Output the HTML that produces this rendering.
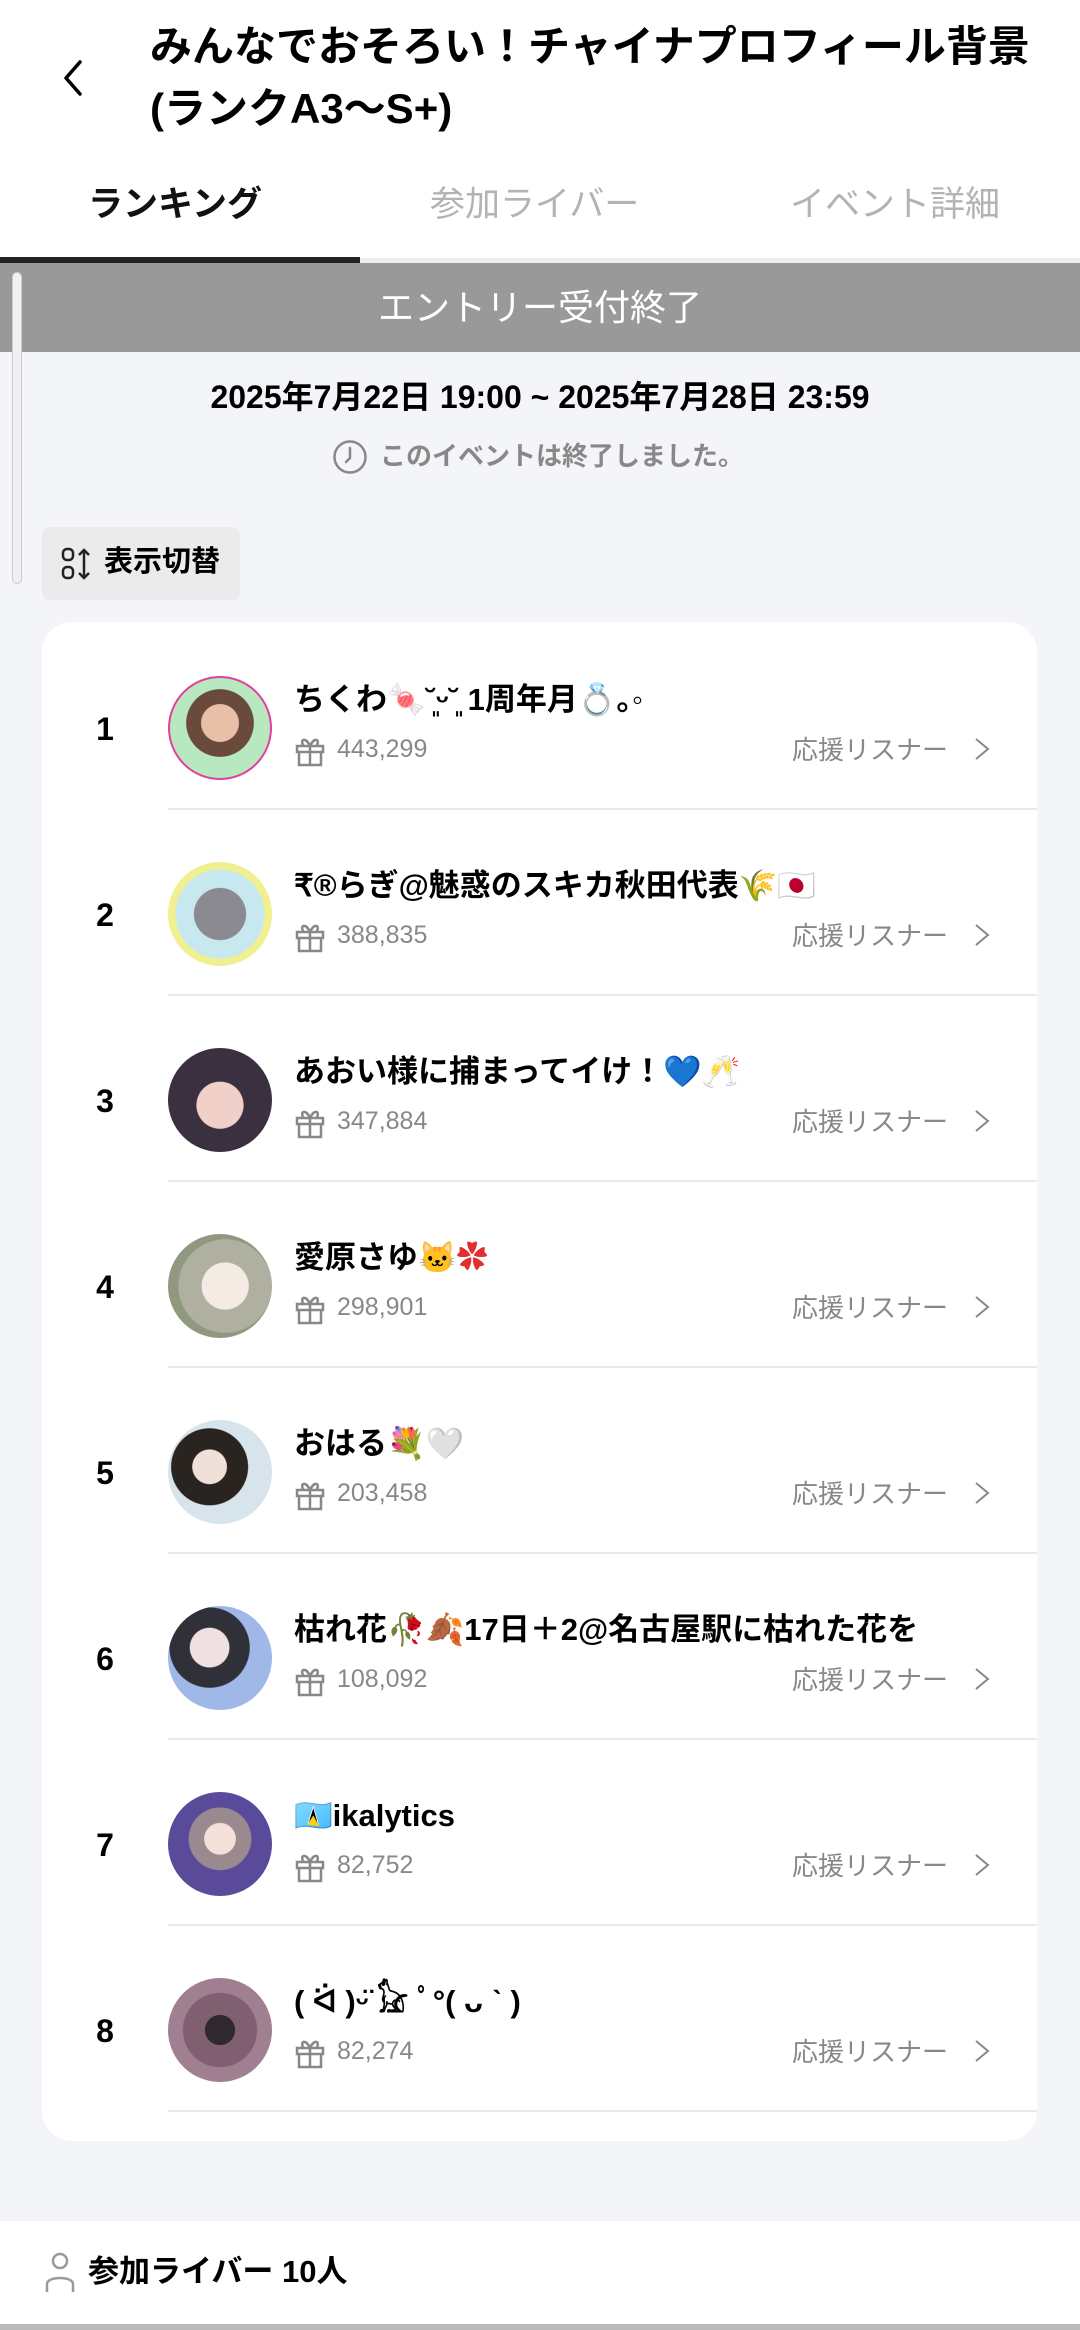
<!DOCTYPE html>
<html><head><meta charset="utf-8"><style>
*{margin:0;padding:0;box-sizing:border-box}
body{width:1080px;height:2330px;background:#f4f5f8;font-family:"Liberation Sans","Noto Sans CJK JP",sans-serif;position:relative;overflow:hidden}
.abs{position:absolute}
.hdr{left:0;top:0;width:1080px;height:263px;background:#fff}
.title{left:150px;top:16px;font-size:42px;font-weight:bold;line-height:62px;color:#000;white-space:nowrap}
.tab{top:180px;font-size:35px;line-height:50px;white-space:nowrap}
.banner{left:0;top:263px;width:1080px;height:89px;background:#999;color:#fff;font-size:36px;text-align:center;line-height:89px}
.card{left:42px;top:622px;width:995px;height:1519px;background:#fff;border-radius:30px}
.row{left:0;width:1080px;height:186px}
.rank{left:90px;width:30px;text-align:center;font-size:32px;font-weight:bold;top:87px}
.av{left:168px;top:52px;width:104px;height:104px;border-radius:50%}
.name{left:294px;top:54px;font-size:31px;font-weight:bold;white-space:nowrap;line-height:44px}
.pts{left:337px;top:111px;font-size:25px;color:#888}
.gift{left:294px;top:110px}
.lis{left:792px;top:106px;font-size:26px;color:#888}
.chev{left:972px;top:112px}
.sep{left:168px;top:184px;width:869px;height:2px;background:#e8e8e8}
</style></head><body>
<div class="abs hdr"></div>
<svg class="abs" style="left:58px;top:58px" width="30" height="40" viewBox="0 0 30 40"><path d="M22 4 L8 20 L22 36" fill="none" stroke="#000" stroke-width="3.5" stroke-linecap="round" stroke-linejoin="round"/></svg>
<div class="abs title">みんなでおそろい！チャイナプロフィール背景<br>(ランクA3〜S+)</div>
<div class="abs tab" style="left:88px;color:#111;font-weight:bold">ランキング</div>
<div class="abs tab" style="left:430px;color:#b3b3b3">参加ライバー</div>
<div class="abs tab" style="left:790px;color:#b3b3b3">イベント詳細</div>
<div class="abs" style="left:0;top:258px;width:1080px;height:5px;background:#eee"></div>
<div class="abs" style="left:0;top:257px;width:360px;height:6px;background:#222"></div>
<div class="abs banner">エントリー受付終了</div>
<div class="abs" style="left:12px;top:272px;width:10px;height:312px;border:1.5px solid #ccc;border-radius:5px;background:#f0f0f0"></div>
<div class="abs" style="left:0;top:376px;width:1080px;text-align:center;font-size:32px;font-weight:bold;line-height:42px">2025年7月22日 19:00 ~ 2025年7月28日 23:59</div>
<svg class="abs" style="left:332px;top:439px" width="36" height="36" viewBox="0 0 36 36"><circle cx="18" cy="18" r="15.5" fill="none" stroke="#888" stroke-width="2.5"/><path d="M18 9 V19 L14 23" fill="none" stroke="#888" stroke-width="2.5" stroke-linecap="round"/></svg>
<div class="abs" style="left:380px;top:437px;font-size:26px;color:#888;font-weight:bold;line-height:38px">このイベントは終了しました。</div>
<div class="abs" style="left:42px;top:527px;width:198px;height:73px;background:#ebebeb;border-radius:8px"></div>
<svg class="abs" style="left:60px;top:546px" width="40" height="36" viewBox="0 0 40 36"><rect x="3" y="3" width="10" height="11" rx="4" fill="none" stroke="#222" stroke-width="2.5"/><rect x="3" y="21" width="10" height="11" rx="4" fill="none" stroke="#222" stroke-width="2.5"/><path d="M24 4 V32 M19 9 L24 4 L29 9 M19 27 L24 32 L29 27" fill="none" stroke="#222" stroke-width="2.5"/></svg>
<div class="abs" style="left:104px;top:542px;font-size:29px;font-weight:bold;line-height:40px">表示切替</div>
<div class="abs card"></div>

<div class="abs row" style="top:624px"><div class="abs rank">1</div><div class="abs av" style="background:radial-gradient(circle at 50% 45%,#e8c0a8 0 25%,#6a4a3a 26% 45%,#b8e8c0 46%);border:2px solid #e040a0"></div><div class="abs name">ちくわ<span style="color:#e040e0">🍬</span>˘͈ᵕ˘͈ 1周年月<span style="color:#e040e0">💍</span>｡◦</div><svg class="abs gift" width="32" height="34" viewBox="0 0 32 34"><path d="M3 12 H29 V18 H3 Z M5 18 V31 H27 V18 M16 12 V31 M16 12 C12 3 6 5 9 11 M16 12 C20 3 26 5 23 11" fill="none" stroke="#888" stroke-width="2.5"/></svg><div class="abs pts">443,299</div><div class="abs lis">応援リスナー</div><svg class="abs chev" width="20" height="26" viewBox="0 0 20 26"><path d="M4 3 L16 13 L4 23" fill="none" stroke="#888" stroke-width="2"/></svg><div class="abs sep"></div></div>

<div class="abs row" style="top:810px"><div class="abs rank">2</div><div class="abs av" style="background:radial-gradient(circle at 50% 50%,#8a8a90 0 35%,#c8e8f0 36% 60%,#f0f090 61%)"></div><div class="abs name">₹®らぎ@魅惑のスキカ秋田代表<span style="color:#f0a020">🌾</span>🇯🇵</div><svg class="abs gift" width="32" height="34" viewBox="0 0 32 34"><path d="M3 12 H29 V18 H3 Z M5 18 V31 H27 V18 M16 12 V31 M16 12 C12 3 6 5 9 11 M16 12 C20 3 26 5 23 11" fill="none" stroke="#888" stroke-width="2.5"/></svg><div class="abs pts">388,835</div><div class="abs lis">応援リスナー</div><svg class="abs chev" width="20" height="26" viewBox="0 0 20 26"><path d="M4 3 L16 13 L4 23" fill="none" stroke="#888" stroke-width="2"/></svg><div class="abs sep"></div></div>

<div class="abs row" style="top:996px"><div class="abs rank">3</div><div class="abs av" style="background:radial-gradient(circle at 50% 55%,#f0d0c8 0 30%,#3a3040 31%)"></div><div class="abs name">あおい様に捕まってイけ！<span style="color:#1020e0">💙</span>🥂</div><svg class="abs gift" width="32" height="34" viewBox="0 0 32 34"><path d="M3 12 H29 V18 H3 Z M5 18 V31 H27 V18 M16 12 V31 M16 12 C12 3 6 5 9 11 M16 12 C20 3 26 5 23 11" fill="none" stroke="#888" stroke-width="2.5"/></svg><div class="abs pts">347,884</div><div class="abs lis">応援リスナー</div><svg class="abs chev" width="20" height="26" viewBox="0 0 20 26"><path d="M4 3 L16 13 L4 23" fill="none" stroke="#888" stroke-width="2"/></svg><div class="abs sep"></div></div>

<div class="abs row" style="top:1182px"><div class="abs rank">4</div><div class="abs av" style="background:radial-gradient(circle at 55% 50%,#f4ece4 0 30%,#b0b0a0 31% 60%,#909880 61%)"></div><div class="abs name">愛原さゆ<span style="color:#f0a040">🐱</span><span style="color:#e03030">✿</span></div><svg class="abs gift" width="32" height="34" viewBox="0 0 32 34"><path d="M3 12 H29 V18 H3 Z M5 18 V31 H27 V18 M16 12 V31 M16 12 C12 3 6 5 9 11 M16 12 C20 3 26 5 23 11" fill="none" stroke="#888" stroke-width="2.5"/></svg><div class="abs pts">298,901</div><div class="abs lis">応援リスナー</div><svg class="abs chev" width="20" height="26" viewBox="0 0 20 26"><path d="M4 3 L16 13 L4 23" fill="none" stroke="#888" stroke-width="2"/></svg><div class="abs sep"></div></div>

<div class="abs row" style="top:1368px"><div class="abs rank">5</div><div class="abs av" style="background:radial-gradient(circle at 40% 45%,#f0e0d8 0 20%,#2a2420 21% 45%,#d8e4ec 46%)"></div><div class="abs name">おはる<span style="color:#e040e0">💐</span><span style="color:#ccc">🤍</span></div><svg class="abs gift" width="32" height="34" viewBox="0 0 32 34"><path d="M3 12 H29 V18 H3 Z M5 18 V31 H27 V18 M16 12 V31 M16 12 C12 3 6 5 9 11 M16 12 C20 3 26 5 23 11" fill="none" stroke="#888" stroke-width="2.5"/></svg><div class="abs pts">203,458</div><div class="abs lis">応援リスナー</div><svg class="abs chev" width="20" height="26" viewBox="0 0 20 26"><path d="M4 3 L16 13 L4 23" fill="none" stroke="#888" stroke-width="2"/></svg><div class="abs sep"></div></div>

<div class="abs row" style="top:1554px"><div class="abs rank">6</div><div class="abs av" style="background:radial-gradient(circle at 40% 40%,#f0e0e0 0 22%,#303038 23% 45%,#a0b8e8 46%)"></div><div class="abs name">枯れ花<span style="color:#c03030">🥀</span><span style="color:#d07030">🍂</span>17日＋2@名古屋駅に枯れた花を</div><svg class="abs gift" width="32" height="34" viewBox="0 0 32 34"><path d="M3 12 H29 V18 H3 Z M5 18 V31 H27 V18 M16 12 V31 M16 12 C12 3 6 5 9 11 M16 12 C20 3 26 5 23 11" fill="none" stroke="#888" stroke-width="2.5"/></svg><div class="abs pts">108,092</div><div class="abs lis">応援リスナー</div><svg class="abs chev" width="20" height="26" viewBox="0 0 20 26"><path d="M4 3 L16 13 L4 23" fill="none" stroke="#888" stroke-width="2"/></svg><div class="abs sep"></div></div>

<div class="abs row" style="top:1740px"><div class="abs rank">7</div><div class="abs av" style="background:radial-gradient(circle at 50% 45%,#f4e0d8 0 20%,#9a8a90 21% 40%,#5a4a9a 41%)"></div><div class="abs name"><span style="color:#60b0f0">🇱🇨</span>ikalytics</div><svg class="abs gift" width="32" height="34" viewBox="0 0 32 34"><path d="M3 12 H29 V18 H3 Z M5 18 V31 H27 V18 M16 12 V31 M16 12 C12 3 6 5 9 11 M16 12 C20 3 26 5 23 11" fill="none" stroke="#888" stroke-width="2.5"/></svg><div class="abs pts">82,752</div><div class="abs lis">応援リスナー</div><svg class="abs chev" width="20" height="26" viewBox="0 0 20 26"><path d="M4 3 L16 13 L4 23" fill="none" stroke="#888" stroke-width="2"/></svg><div class="abs sep"></div></div>

<div class="abs row" style="top:1926px"><div class="abs rank">8</div><div class="abs av" style="background:radial-gradient(circle at 50% 50%,#302830 0 20%,#806070 21% 50%,#a08090 51%)"></div><div class="abs name">( ᐛ )ᵕ̈ 𓃠 ﾟ°( ᴗ ˋ )</div><svg class="abs gift" width="32" height="34" viewBox="0 0 32 34"><path d="M3 12 H29 V18 H3 Z M5 18 V31 H27 V18 M16 12 V31 M16 12 C12 3 6 5 9 11 M16 12 C20 3 26 5 23 11" fill="none" stroke="#888" stroke-width="2.5"/></svg><div class="abs pts">82,274</div><div class="abs lis">応援リスナー</div><svg class="abs chev" width="20" height="26" viewBox="0 0 20 26"><path d="M4 3 L16 13 L4 23" fill="none" stroke="#888" stroke-width="2"/></svg><div class="abs sep"></div></div>

<div class="abs" style="left:0;top:2221px;width:1080px;height:104px;background:#fff"></div>
<svg class="abs" style="left:44px;top:2250px" width="32" height="42" viewBox="0 0 32 42"><circle cx="16" cy="11" r="7" fill="none" stroke="#999" stroke-width="2.5"/><path d="M3 42 V34 C3 26 29 26 29 34 V42" fill="none" stroke="#999" stroke-width="2.5"/></svg>
<div class="abs" style="left:88px;top:2250px;font-size:31px;font-weight:bold;line-height:44px">参加ライバー 10人</div>
<div class="abs" style="left:0;top:2324px;width:1080px;height:6px;background:#bbb"></div>
</body></html>
